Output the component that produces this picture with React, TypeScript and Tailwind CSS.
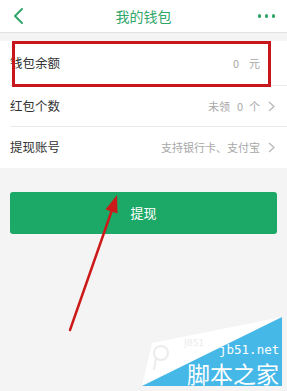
import React from "react";

function Chevron() {
  return (
    <svg width="7" height="11" viewBox="0 0 7 11" className="ml-[8px] shrink-0">
      <polyline points="1,1 6,5.5 1,10" fill="none" stroke="#b5b5b5" strokeWidth="1.2" />
    </svg>
  );
}

export default function App() {
  return (
    <div className="relative w-[287px] min-h-[391px] overflow-hidden bg-[#f4f4f4] font-['Noto_Sans_CJK_SC','Liberation_Sans',sans-serif]">
      {/* Header */}
      <div className="grid h-[33px] grid-cols-[1fr_auto_1fr] items-center border-b border-[#e2e2e2] bg-white">
        <div className="flex items-center pl-[12px]">
          <svg width="12" height="18" viewBox="0 0 12 18">
            <polyline points="10,2 3,9 10,16" fill="none" stroke="#2fa66a" strokeWidth="2" strokeLinecap="round" strokeLinejoin="round" />
          </svg>
        </div>
        <div className="text-[14px] leading-none text-[#2fa66a]">我的钱包</div>
        <div className="flex items-center justify-end gap-[3.5px] pr-[12px]">
          <span className="h-[3.5px] w-[3.5px] rounded-full bg-[#2fa66a]" />
          <span className="h-[3.5px] w-[3.5px] rounded-full bg-[#2fa66a]" />
          <span className="h-[3.5px] w-[3.5px] rounded-full bg-[#2fa66a]" />
        </div>
      </div>

      {/* List */}
      <div className="mt-[8px] bg-white">
        <div className="ml-[10px] flex h-[45px] items-center justify-between border-b border-[#ebebeb] pr-[12px]">
          <span className="text-[12.5px] text-[#333333]">钱包余额</span>
          <div className="flex items-center text-[11px] text-[#a8a8a8]">
            <span>0</span>
            <span className="ml-[10px]">元</span>
            <span className="ml-[8px] w-[7px]" />
          </div>
        </div>
        <div className="ml-[10px] flex h-[41px] items-center justify-between border-b border-[#ebebeb] pr-[12px]">
          <span className="text-[12.5px] text-[#333333]">红包个数</span>
          <div className="flex items-center text-[11px] text-[#a8a8a8]">
            <span>未领</span>
            <span className="ml-[7px]">0</span>
            <span className="ml-[6px]">个</span>
            <Chevron />
          </div>
        </div>
        <div className="ml-[10px] flex h-[41px] items-center justify-between pr-[12px]">
          <span className="text-[12.5px] text-[#333333]">提现账号</span>
          <div className="flex items-center text-[11px] text-[#a8a8a8]">
            <span>支持银行卡、支付宝</span>
            <Chevron />
          </div>
        </div>
      </div>

      {/* Button */}
      <div className="mx-[10px] mt-[24px] flex h-[42px] items-center justify-center rounded-[3px] bg-[#1ca866] text-[13px] text-white">
        提现
      </div>

      {/* Red highlight box */}
      <div className="absolute left-[12px] top-[41px] h-[46px] w-[259px] border-[3px] border-[#c8161d]" />

      {/* Arrow annotation */}
      <svg className="pointer-events-none absolute left-0 top-0" width="287" height="391" viewBox="0 0 287 391">
        <line x1="70" y1="330" x2="112" y2="210" stroke="#cc1a1a" strokeWidth="2.5" strokeLinecap="round" />
        <polygon points="117,195 105.5,209.5 117.5,213.5" fill="#cc1a1a" />
      </svg>

      {/* Watermark */}
      <svg className="pointer-events-none absolute left-0 top-0" width="287" height="391" viewBox="0 0 287 391">
        <polygon points="152,343 282,317 142,386" fill="#ffffff" />
        <polygon points="282,317 282,386 142,386" fill="#45b8e8" />
        <circle cx="161" cy="353" r="7" fill="none" stroke="#ececec" strokeWidth="2" />
        <line x1="156" y1="357" x2="154" y2="370" stroke="#ececec" strokeWidth="2" />
      </svg>
      <div className="pointer-events-none absolute left-[184px] top-[339px] text-[9px] leading-none text-[#ececec] font-['DejaVu_Sans',sans-serif]">
        JB51
      </div>
      <div className="pointer-events-none absolute left-[219px] top-[344px] text-[12.5px] leading-none text-white font-['DejaVu_Sans_Mono',monospace]">
        jb51.net
      </div>
      <div className="pointer-events-none absolute left-[187px] top-[362px] text-[23px] leading-none text-white">
        脚本之家
      </div>
    </div>
  );
}
